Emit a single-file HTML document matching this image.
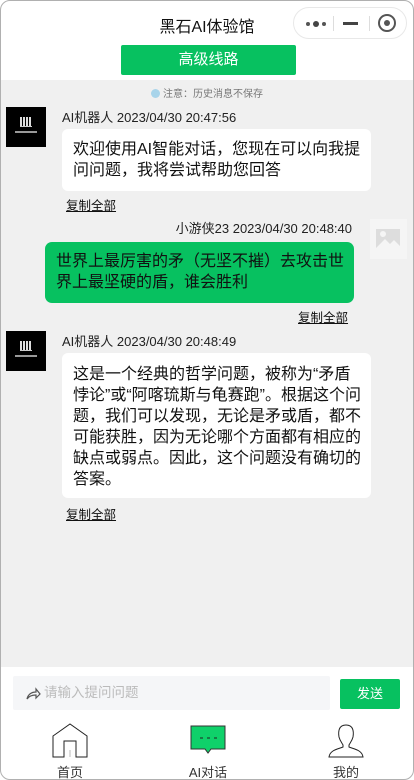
<!DOCTYPE html>
<html><head><meta charset="utf-8">
<style>
*{margin:0;padding:0;box-sizing:border-box}
body{width:414px;height:780px;overflow:hidden;background:#fff;font-family:"Liberation Sans","Noto Sans CJK SC",sans-serif;position:relative}
.frame{position:absolute;inset:0;border:1px solid #b0b0b0;border-radius:10px;overflow:hidden;background:#fff}
.abs{position:absolute}
.title{left:0;right:0;top:12px;text-align:center;font-size:16px;color:#111}
.cap{left:292px;top:6px;width:114px;height:32px;border:1px solid #e8e8e8;border-radius:16px;background:#fff}
.btn{left:120px;top:44px;width:175px;height:30px;background:#07c160;border-radius:2px;color:#fff;font-size:15px;text-align:center;line-height:30px}
.body{left:0;top:79px;width:414px;height:587px;background:#f0f0f0}
.notice{left:0;right:0;top:84px;text-align:center;font-size:10px;color:#777}
.av{width:40px;height:40px;background:#000}
.name{font-size:13px;color:#222}
.bub{background:#fff;border-radius:6px;font-size:16px;line-height:21px;color:#111;padding:10px 11px 8px;white-space:nowrap}
.copy{font-size:12.5px;color:#111;text-decoration:underline}
.tab{font-size:13px;color:#333;text-align:center;width:80px}
</style></head><body><div class="frame">
<div class="abs title">黑石AI体验馆</div>
<div class="abs cap">
 <div class="abs" style="left:12px;top:13px;width:22px;height:6px">
  <span class="abs" style="left:0;top:1px;width:4px;height:4px;border-radius:2px;background:#555"></span>
  <span class="abs" style="left:7px;top:0;width:6px;height:6px;border-radius:3px;background:#444"></span>
  <span class="abs" style="left:16px;top:1px;width:4px;height:4px;border-radius:2px;background:#555"></span>
 </div>
 <div class="abs" style="left:39px;top:8px;width:1px;height:15px;background:#ddd"></div>
 <div class="abs" style="left:49px;top:14px;width:15px;height:3px;background:#444"></div>
 <div class="abs" style="left:75px;top:8px;width:1px;height:15px;background:#ddd"></div>
 <div class="abs" style="left:84px;top:6px;width:18px;height:18px;border:2px solid #555;border-radius:50%"><div class="abs" style="left:4px;top:4px;width:6px;height:6px;border-radius:3px;background:#555"></div></div>
</div>
<div class="abs btn">高级线路</div>
<div class="abs body"></div>
<div class="abs notice"><span style="display:inline-block;width:9px;height:9px;border-radius:50%;background:#a8d4ea;vertical-align:-1px;margin-right:3px"></span>注意：历史消息不保存</div>

<div class="abs av" style="left:5px;top:106px"><div class="abs" style="left:14px;top:10px;width:12px;height:10px;border-bottom:1px solid #ccc;background:repeating-linear-gradient(90deg,#ddd 0 2px,transparent 2px 3px)"></div><div class="abs" style="left:9px;top:24px;width:22px;height:2px;background:#999"></div></div>
<div class="abs name" style="left:61px;top:106px">AI机器人 2023/04/30 20:47:56</div>
<div class="abs bub" style="left:61px;top:128px;width:309px;height:62px">欢迎使用AI智能对话，您现在可以向我提<br>问问题，我将尝试帮助您回答</div>
<div class="abs copy" style="left:65px;top:194px">复制全部</div>

<div class="abs name" style="right:61px;top:217px">小游侠23 2023/04/30 20:48:40</div>
<div class="abs" style="left:369px;top:218px;width:37px;height:40px;background:#f5f5f5"><svg width="37" height="40"><rect x="6" y="10" width="24" height="19" fill="#ddd"/><circle cx="13" cy="15" r="3" fill="#f5f5f5"/><path d="M6 29 L15 20 L20 25 L24 21 L30 27 L30 29Z" fill="#f5f5f5"/></svg></div>
<div class="abs bub" style="left:44px;top:241px;width:309px;height:61px;background:#07c160;border-radius:7px;padding-top:9px">世界上最厉害的矛（无坚不摧）去攻击世<br>界上最坚硬的盾，谁会胜利</div>
<div class="abs copy" style="left:297px;top:306px">复制全部</div>

<div class="abs av" style="left:5px;top:330px"><div class="abs" style="left:14px;top:10px;width:12px;height:10px;border-bottom:1px solid #ccc;background:repeating-linear-gradient(90deg,#ddd 0 2px,transparent 2px 3px)"></div><div class="abs" style="left:9px;top:24px;width:22px;height:2px;background:#999"></div></div>
<div class="abs name" style="left:61px;top:330px">AI机器人 2023/04/30 20:48:49</div>
<div class="abs bub" style="left:61px;top:352px;width:309px;height:145px;padding-top:11px">这是一个经典的哲学问题，被称为“矛盾<br>悖论”或“阿喀琉斯与龟赛跑”。根据这个问<br>题，我们可以发现，无论是矛或盾，都不<br>可能获胜，因为无论哪个方面都有相应的<br>缺点或弱点。因此，这个问题没有确切的<br>答案。</div>
<div class="abs copy" style="left:65px;top:503px">复制全部</div>

<div class="abs" style="left:12px;top:675px;width:317px;height:34px;background:#f5f6f8;border-radius:2px;font-size:13.5px;color:#bbb;line-height:34px;padding-left:31px">请输入提问问题
 <svg class="abs" style="left:12px;top:11px" width="16" height="14"><path d="M2 12 C3 7 7 5 11 5 L11 2 L15 7 L11 11 L11 8 C7 8 4 9 2 12Z" fill="none" stroke="#555" stroke-width="1.2"/></svg></div>
<div class="abs" style="left:339px;top:678px;width:60px;height:30px;background:#07c160;border-radius:2px;color:#fff;font-size:13px;text-align:center;line-height:30px">发送</div>

<svg class="abs" style="left:51px;top:722px" width="36" height="36"><path d="M1 13 L18 1 L35 13 L35 34 L24 34 L24 18 L12 18 L12 34 L1 34Z" fill="none" stroke="#222" stroke-width="1"/><rect x="17" y="27" width="2" height="7" fill="#ddd"/></svg>
<svg class="abs" style="left:189px;top:724px" width="36" height="32"><path d="M1 1 L35 1 L35 24 L21 24 L18 28 L15 24 L1 24Z" fill="#0fd16a" stroke="#333" stroke-width="1"/><path d="M10 13h3M17 13h3M24 13h3" stroke="#222"/></svg>
<svg class="abs" style="left:327px;top:722px" width="36" height="36"><path d="M18 2 C11 2 10 8 11 14 C12 18 14 20 15 22 L15 24 C10 26 2 27 1 34 L35 34 C34 27 26 26 21 24 L21 22 C22 20 24 18 25 14 C26 8 25 2 18 2Z" fill="none" stroke="#222" stroke-width="1"/></svg>
<div class="abs tab" style="left:29px;top:761px">首页</div>
<div class="abs tab" style="left:167px;top:761px">AI对话</div>
<div class="abs tab" style="left:305px;top:761px">我的</div>
</div></body></html>
